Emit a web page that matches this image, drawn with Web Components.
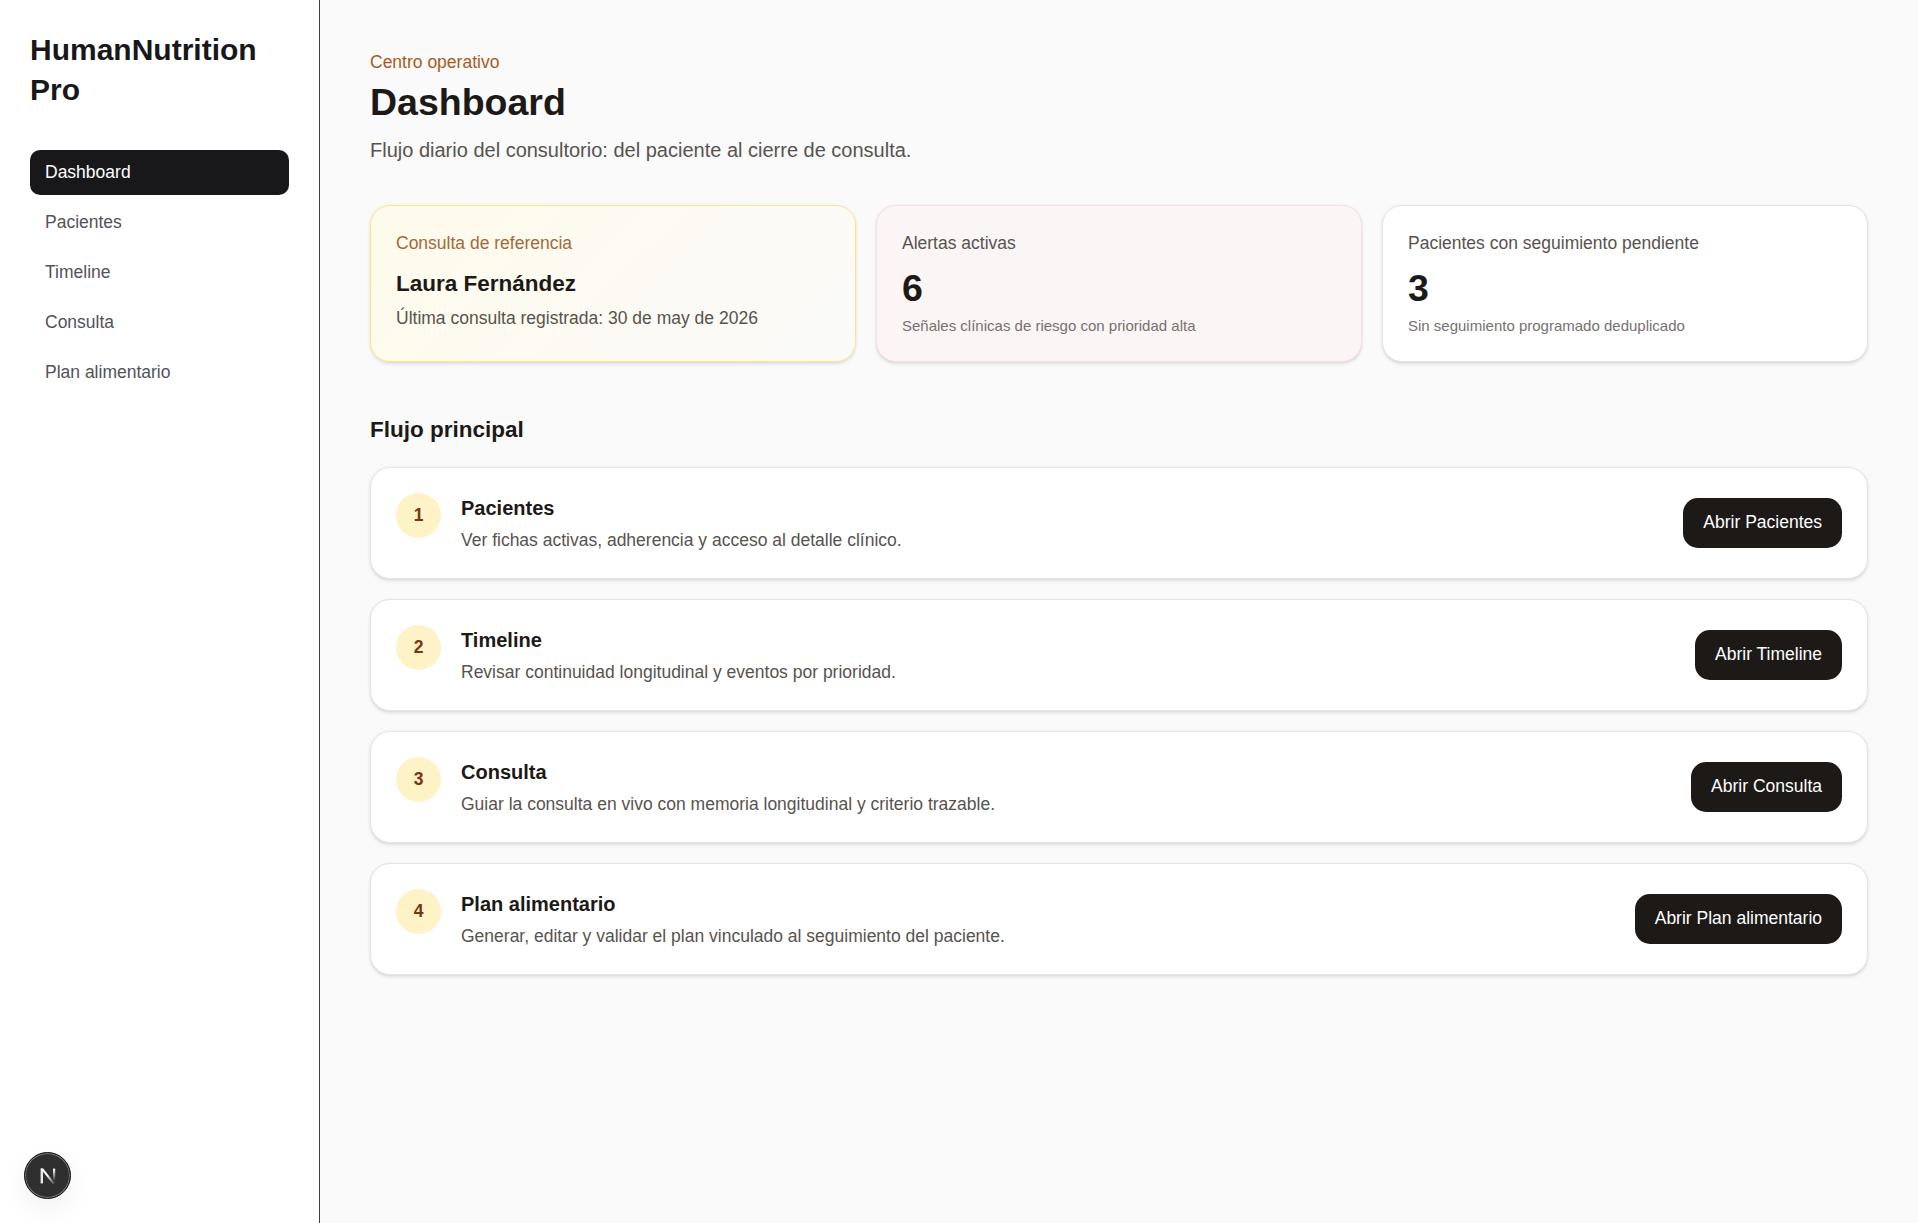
<!doctype html>
<html lang="es">
<head>
<meta charset="utf-8">
<title>HumanNutrition Pro</title>
<style>
  html, body { margin: 0; height: 100%; }
  body { font-family: "Liberation Sans", Arial, sans-serif; color: #1c1917; background: #fafafa; }
</style>
</head>
<body>
<hn-app>
  <hn-sidebar slot="sidebar" brand="HumanNutrition Pro">
    <hn-nav-item active>Dashboard</hn-nav-item>
    <hn-nav-item>Pacientes</hn-nav-item>
    <hn-nav-item>Timeline</hn-nav-item>
    <hn-nav-item>Consulta</hn-nav-item>
    <hn-nav-item>Plan alimentario</hn-nav-item>
  </hn-sidebar>

  <hn-page-header eyebrow="Centro operativo" heading="Dashboard">
    Flujo diario del consultorio: del paciente al cierre de consulta.
  </hn-page-header>

  <hn-metric-grid>
    <hn-metric-card tone="amber" label="Consulta de referencia" name="Laura Fernández">
      Última consulta registrada: 30 de may de 2026
    </hn-metric-card>
    <hn-metric-card tone="rose" label="Alertas activas" value="6">
      Señales clínicas de riesgo con prioridad alta
    </hn-metric-card>
    <hn-metric-card label="Pacientes con seguimiento pendiente" value="3">
      Sin seguimiento programado deduplicado
    </hn-metric-card>
  </hn-metric-grid>

  <hn-flow heading="Flujo principal">
    <hn-flow-step step="1" heading="Pacientes" action="Abrir Pacientes">Ver fichas activas, adherencia y acceso al detalle clínico.</hn-flow-step>
    <hn-flow-step step="2" heading="Timeline" action="Abrir Timeline">Revisar continuidad longitudinal y eventos por prioridad.</hn-flow-step>
    <hn-flow-step step="3" heading="Consulta" action="Abrir Consulta">Guiar la consulta en vivo con memoria longitudinal y criterio trazable.</hn-flow-step>
    <hn-flow-step step="4" heading="Plan alimentario" action="Abrir Plan alimentario">Generar, editar y validar el plan vinculado al seguimiento del paciente.</hn-flow-step>
  </hn-flow>

  <hn-dev-badge></hn-dev-badge>
</hn-app>

<script>
class HnApp extends HTMLElement {
  constructor() {
    super();
    this.attachShadow({ mode: "open" }).innerHTML = `
      <style>
        :host { display: flex; min-height: 100vh; align-items: stretch; }
        main { flex: 1; min-width: 0; padding: 50px; }
      </style>
      <slot name="sidebar"></slot>
      <main><slot></slot></main>
    `;
  }
}

class HnSidebar extends HTMLElement {
  constructor() {
    super();
    this.attachShadow({ mode: "open" }).innerHTML = `
      <style>
        :host {
          display: block;
          box-sizing: border-box;
          flex: 0 0 320px;
          padding: 30px;
          background: #fff;
          border-right: 1.25px solid #3f3f46;
        }
        h2 { margin: 0 0 40px; width: 240px; font-size: 30px; line-height: 40px; font-weight: 700; color: #18181b; }
        nav { display: flex; flex-direction: column; gap: 5px; width: 259px; }
      </style>
      <h2>${this.getAttribute("brand")}</h2>
      <nav><slot></slot></nav>
    `;
  }
}

class HnNavItem extends HTMLElement {
  constructor() {
    super();
    this.attachShadow({ mode: "open" }).innerHTML = `
      <style>
        :host {
          display: block;
          padding: 10px 15px;
          border-radius: 10px;
          font-size: 17.5px;
          line-height: 25px;
          color: #52525b;
        }
        :host([active]) { background: #18181b; color: #fff; }
      </style>
      <slot></slot>
    `;
  }
}

class HnPageHeader extends HTMLElement {
  constructor() {
    super();
    this.attachShadow({ mode: "open" }).innerHTML = `
      <style>
        :host { display: block; }
        .eyebrow { margin: 0; font-size: 17.5px; line-height: 25px; color: #a85a1c; }
        h1 { margin: 5px 0 0; font-size: 37.5px; line-height: 45px; font-weight: 700; color: #1c1917; }
        .lead { margin: 10px 0 0; font-size: 20px; line-height: 30px; color: #57534e; }
      </style>
      <p class="eyebrow">${this.getAttribute("eyebrow")}</p>
      <h1>${this.getAttribute("heading")}</h1>
      <p class="lead"><slot></slot></p>
    `;
  }
}

class HnMetricGrid extends HTMLElement {
  constructor() {
    super();
    this.attachShadow({ mode: "open" }).innerHTML = `
      <style>
        :host { display: grid; grid-template-columns: repeat(3, minmax(0, 1fr)); gap: 20px; margin-top: 40px; }
      </style>
      <slot></slot>
    `;
  }
}

class HnMetricCard extends HTMLElement {
  constructor() {
    super();
    const name = this.getAttribute("name");
    const value = this.getAttribute("value");
    const main = name
      ? `<p class="name">${name}</p><p class="meta"><slot></slot></p>`
      : `<p class="value">${value}</p><p class="note"><slot></slot></p>`;
    this.attachShadow({ mode: "open" }).innerHTML = `
      <style>
        :host {
          display: block;
          padding: 25px;
          border: 1.25px solid #e7e5e4;
          border-radius: 20px;
          background: #fff;
          box-shadow: 0 1.25px 3.75px rgba(0,0,0,.1), 0 1.25px 2.5px -1.25px rgba(0,0,0,.1);
        }
        :host([tone="amber"]) { border-color: #fde68a; background: linear-gradient(135deg, #fffbeb, #fafafa); }
        :host([tone="rose"]) { border-color: #fbdfe3; background: #fcf5f6; }
        p { margin: 0; }
        .label { font-size: 17.5px; line-height: 25px; color: #57534e; }
        :host([tone="amber"]) .label { color: #a16a3c; }
        .name { margin-top: 10px; font-size: 22.5px; line-height: 35px; font-weight: 700; color: #1c1917; }
        .meta { margin-top: 5px; font-size: 17.5px; line-height: 25px; color: #57534e; }
        .value { margin-top: 10px; font-size: 37.5px; line-height: 45px; font-weight: 700; color: #1c1917; }
        .note { margin-top: 5px; font-size: 15px; line-height: 20px; color: #78716c; }
      </style>
      <p class="label">${this.getAttribute("label")}</p>
      ${main}
    `;
  }
}

class HnFlow extends HTMLElement {
  constructor() {
    super();
    this.attachShadow({ mode: "open" }).innerHTML = `
      <style>
        :host { display: block; margin-top: 50px; }
        h2 { margin: 0; font-size: 22.5px; line-height: 35px; font-weight: 700; color: #1c1917; }
        .steps { display: flex; flex-direction: column; gap: 20px; margin-top: 20px; }
      </style>
      <h2>${this.getAttribute("heading")}</h2>
      <div class="steps"><slot></slot></div>
    `;
  }
}

class HnFlowStep extends HTMLElement {
  constructor() {
    super();
    this.attachShadow({ mode: "open" }).innerHTML = `
      <style>
        :host {
          display: flex;
          align-items: center;
          justify-content: space-between;
          gap: 20px;
          padding: 25px;
          border: 1.25px solid #e7e5e4;
          border-radius: 20px;
          background: #fff;
          box-shadow: 0 1.25px 3.75px rgba(0,0,0,.1), 0 1.25px 2.5px -1.25px rgba(0,0,0,.1);
        }
        .left { display: flex; align-items: flex-start; gap: 20px; }
        .num {
          flex: none;
          display: flex;
          align-items: center;
          justify-content: center;
          width: 45px;
          height: 45px;
          border-radius: 50%;
          background: #fef3c7;
          color: #78350f;
          font-size: 17.5px;
          font-weight: 700;
        }
        h3 { margin: 0; font-size: 20px; line-height: 30px; font-weight: 700; color: #1c1917; }
        p { margin: 5px 0 0; font-size: 17.5px; line-height: 25px; color: #57534e; }
        .btn {
          flex: none;
          padding: 11.5px 20px 13.5px;
          border-radius: 15px;
          background: #1c1917;
          color: #fff;
          font-size: 17.5px;
          line-height: 25px;
          text-decoration: none;
        }
      </style>
      <div class="left">
        <span class="num">${this.getAttribute("step")}</span>
        <div>
          <h3>${this.getAttribute("heading")}</h3>
          <p><slot></slot></p>
        </div>
      </div>
      <a class="btn" href="#">${this.getAttribute("action")}</a>
    `;
  }
}

// Indicador de desarrollo, va flotando sobre la barra lateral
class HnDevBadge extends HTMLElement {
  constructor() {
    super();
    this.attachShadow({ mode: "open" }).innerHTML = `
      <style>
        :host {
          position: fixed;
          left: 24px;
          bottom: 24px;
          display: flex;
          align-items: center;
          justify-content: center;
          box-sizing: border-box;
          width: 47px;
          height: 47px;
          border-radius: 50%;
          background: #2f2f2f;
          border: 1.5px solid #111;
          box-shadow: 0 0 0 1px rgba(255,255,255,.35) inset, 0 10px 30px rgba(0,0,0,.06);
        }
      </style>
      <svg width="20" height="20" viewBox="0 0 20 20" fill="none">
        <defs>
          <linearGradient id="d" x1="5" y1="3" x2="17" y2="18" gradientUnits="userSpaceOnUse">
            <stop offset=".35" stop-color="#fff"/><stop offset="1" stop-color="#fff" stop-opacity=".1"/>
          </linearGradient>
          <linearGradient id="r" x1="15" y1="3" x2="15" y2="14" gradientUnits="userSpaceOnUse">
            <stop offset="0" stop-color="#fff"/><stop offset="1" stop-color="#fff" stop-opacity=".1"/>
          </linearGradient>
        </defs>
        <path d="M2.600 2.600h2.400v14.800h-2.400z" fill="#e8e8e8"/>
        <path d="M2.600 2.600h2.600l11.800 15h-2.800z" fill="url(#d)"/>
        <path d="M15 2.600h2.200v11.400h-2.200z" fill="url(#r)"/>
      </svg>
    `;
  }
}

customElements.define("hn-app", HnApp);
customElements.define("hn-sidebar", HnSidebar);
customElements.define("hn-nav-item", HnNavItem);
customElements.define("hn-page-header", HnPageHeader);
customElements.define("hn-metric-grid", HnMetricGrid);
customElements.define("hn-metric-card", HnMetricCard);
customElements.define("hn-flow", HnFlow);
customElements.define("hn-flow-step", HnFlowStep);
customElements.define("hn-dev-badge", HnDevBadge);
</script>
</body>
</html>
